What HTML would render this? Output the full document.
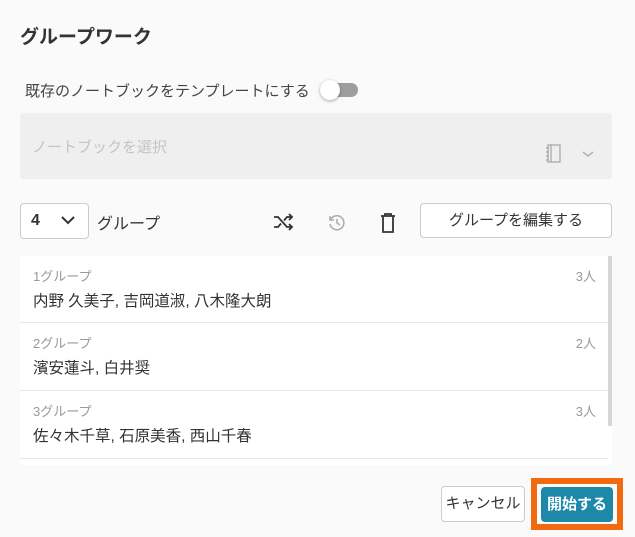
<!DOCTYPE html>
<html><head><meta charset="utf-8"><style>
*{box-sizing:border-box;margin:0;padding:0}
body{width:635px;height:537px;background:#fafafa;font-family:"Liberation Sans","Noto Sans CJK JP",sans-serif;color:#333;position:relative;overflow:hidden}
.a{position:absolute}
.row{position:absolute;left:20px;width:588px;height:67px;border-bottom:1px solid #e6e6e6;background:#fff}
.row .t{position:absolute;left:13px;top:10px;font-size:13px;color:#999}
.row .n{position:absolute;right:12px;top:10px;font-size:13px;color:#999}
.row .m{position:absolute;left:13px;top:33px;font-size:15.5px;color:#333}
</style></head><body>
<div class="a" style="left:20px;top:22px;font-size:19px;font-weight:bold;color:#333">グループワーク</div>
<div class="a" style="left:25px;top:80px;font-size:15px;color:#444">既存のノートブックをテンプレートにする</div>
<div class="a" style="left:324px;top:83px;width:34px;height:14px;border-radius:7px;background:#9e9e9e"></div>
<div class="a" style="left:320px;top:80px;width:20px;height:20px;border-radius:10px;background:#fff;box-shadow:0 1px 3px rgba(0,0,0,.35)"></div>
<div class="a" style="left:20px;top:113px;width:592px;height:66px;background:#efefef;border-radius:4px"></div>
<div class="a" style="left:32px;top:136px;font-size:15px;color:#c4c4c4">ノートブックを選択</div>
<svg class="a" style="left:544px;top:143px" width="20" height="22" viewBox="0 0 20 22" fill="none" stroke="#aaa" stroke-width="1.3"><rect x="4" y="2" width="12" height="17"/><line x1="7" y1="2" x2="7" y2="19"/><line x1="2" y1="5" x2="5" y2="5"/><line x1="2" y1="9" x2="5" y2="9"/><line x1="2" y1="13" x2="5" y2="13"/><line x1="2" y1="17" x2="5" y2="17"/></svg>
<svg class="a" style="left:581px;top:149px" width="14" height="10" viewBox="0 0 14 10" fill="none" stroke="#aaa" stroke-width="1.4"><path d="M2 3l5 4 5-4"/></svg>
<div class="a" style="left:20px;top:203px;width:69px;height:36px;border:1px solid #ccc;border-radius:4px;background:#fff"></div>
<div class="a" style="left:31px;top:212px;font-size:16px;font-weight:bold;color:#333">4</div>
<svg class="a" style="left:60px;top:214px" width="16" height="12" viewBox="0 0 16 12" fill="none" stroke="#333" stroke-width="2"><path d="M2 3l6 6 6-6"/></svg>
<div class="a" style="left:97px;top:210px;font-size:16px;color:#333">グループ</div>
<svg class="a" style="left:273px;top:213px" width="22" height="18" viewBox="0 0 22 18" fill="none" stroke="#333" stroke-width="1.8"><path d="M1 4h4l9 10h5M1 14h4l3-3.5M11 7.5l3-3.5h5M16 1l3 3-3 3M16 11l3 3-3 3"/></svg>
<svg class="a" style="left:327px;top:213px" width="20" height="20" viewBox="0 0 20 20" fill="none" stroke="#aaa" stroke-width="1.5"><path d="M4 6a7 7 0 1 1-1 5M3 3v4h4M10 6v4l3 2"/></svg>
<svg class="a" style="left:379px;top:212px" width="18" height="22" viewBox="0 0 18 22" fill="none" stroke="#333" stroke-width="1.8"><path d="M2 4h14M6 4V2h6v2M4 4v16h10V4"/></svg>
<div class="a" style="left:420px;top:203px;width:192px;height:35px;border:1px solid #ccc;border-radius:4px;background:#fff;font-size:15px;text-align:center;line-height:33px;color:#333">グループを編集する</div>
<div class="a" style="left:20px;top:256px;width:592px;height:209px;background:#fff"></div>
<div class="row" style="top:256px"><span class="t">1グループ</span><span class="n">3人</span><span class="m">内野 久美子, 吉岡道淑, 八木隆大朗</span></div>
<div class="row" style="top:323px;height:68px"><span class="t">2グループ</span><span class="n">2人</span><span class="m">濱安蓮斗, 白井奨</span></div>
<div class="row" style="top:391px;height:68px"><span class="t">3グループ</span><span class="n">3人</span><span class="m">佐々木千草, 石原美香, 西山千春</span></div>
<div class="a" style="left:608px;top:256px;width:4px;height:170px;background:#d6d6d6"></div>
<div class="a" style="left:441px;top:486px;width:84px;height:36px;border:1px solid #ccc;border-radius:4px;background:#fff;font-size:15px;text-align:center;line-height:34px;color:#333">キャンセル</div>
<div class="a" style="left:531px;top:478px;width:92px;height:52px;background:#f26a0f"></div>
<div class="a" style="left:537px;top:484px;width:80px;height:40px;background:#fafafa"></div>
<div class="a" style="left:541px;top:487px;width:72px;height:35px;background:#1e88a8;border-radius:4px;color:#fff;font-weight:bold;font-size:15px;text-align:center;line-height:35px">開始する</div>
</body></html>
